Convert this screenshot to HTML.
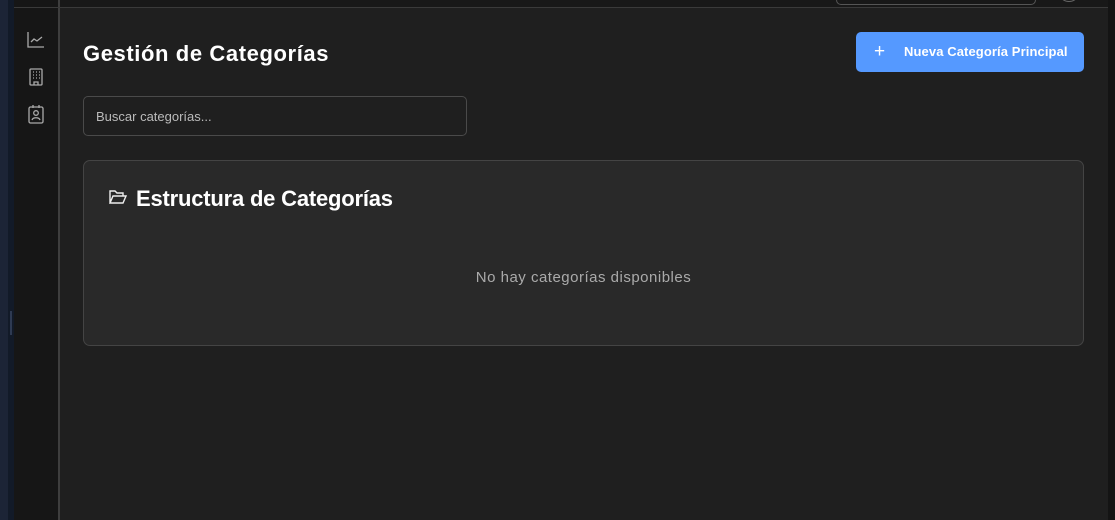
<!DOCTYPE html>
<html><head><style>
*{margin:0;padding:0;box-sizing:border-box}
body{width:1115px;height:520px;overflow:hidden;background:#1f1f1f;font-family:"Liberation Sans",sans-serif;position:relative}
.a{position:absolute}
</style></head><body>
<div class="a" style="left:0;top:0;width:8px;height:520px;background:#1c2436"></div>
<div class="a" style="left:8px;top:0;width:6px;height:520px;background:#121a28"></div>
<div class="a" style="left:10px;top:311px;width:2px;height:24px;background:#2e3a52"></div>
<div class="a" style="left:14px;top:0;width:44px;height:520px;background:#161616"></div>
<div class="a" style="left:58px;top:0;width:2px;height:520px;background:#3e3e3e"></div>
<div class="a" style="left:14px;top:7px;width:1101px;height:1px;background:#3a3a3a"></div>
<div class="a" style="left:60px;top:0;width:1055px;height:7px;background:#181818"></div>
<div class="a" style="left:836px;top:-10px;width:200px;height:15px;border:1px solid #555;border-radius:5px"></div>
<div class="a" style="left:1060px;top:-12px;width:18px;height:14px;border:1px solid #666;border-radius:50%"></div>
<div class="a" style="left:1108px;top:0;width:7px;height:520px;background:#141414"></div>
<svg class="a" style="left:26px;top:30px" width="20" height="100" fill="none" stroke="#aaa" stroke-width="1.3">
<path d="M2 2V17H18M5 12l3-3 3 2 5-4"/>
<rect x="4" y="39" width="12" height="16" rx="1"/><path d="M7 42h1M10 42h1M13 42h1M7 45h1M10 45h1M13 45h1M7 48h1M10 48h1M13 48h1M8 55v-3h4v3"/>
<rect x="3" y="77" width="14" height="16" rx="1.5"/><path d="M7 75v3M13 75v3"/><circle cx="10" cy="83" r="2.3"/><path d="M6 90c1-3 7-3 8 0"/>
</svg>
<div class="a" style="left:83px;top:41px;color:#fff;font-size:22px;font-weight:bold;letter-spacing:0.6px">Gestión de Categorías</div>
<div class="a" style="left:856px;top:32px;width:228px;height:40px;background:#5599ff;border-radius:5px;color:#fff;font-size:13px;font-weight:bold;line-height:40px;padding-left:48px;letter-spacing:0.1px">Nueva Categoría Principal</div>
<div class="a" style="left:874px;top:42px;color:#fff;font-size:19px;line-height:20px">+</div>
<div class="a" style="left:83px;top:96px;width:384px;height:40px;border:1px solid #4a4a4a;border-radius:5px;color:#bbb;font-size:13px;line-height:40px;padding-left:12px">Buscar categorías...</div>
<div class="a" style="left:83px;top:160px;width:1001px;height:186px;border:1px solid #444;border-radius:7px;background:#292929"></div>
<svg class="a" style="left:108px;top:188px" width="20" height="18" fill="none" stroke="#eee" stroke-width="1.4"><path d="M2 15V3h5l2 2h6v3M2 15l3-7h13l-3 7z"/></svg>
<div class="a" style="left:136px;top:186px;color:#fff;font-size:22px;font-weight:bold;letter-spacing:-0.2px">Estructura de Categorías</div>
<div class="a" style="left:83px;top:269px;width:1001px;text-align:center;color:#aaa;font-size:15px;letter-spacing:0.5px">No hay categorías disponibles</div>
</body></html>
